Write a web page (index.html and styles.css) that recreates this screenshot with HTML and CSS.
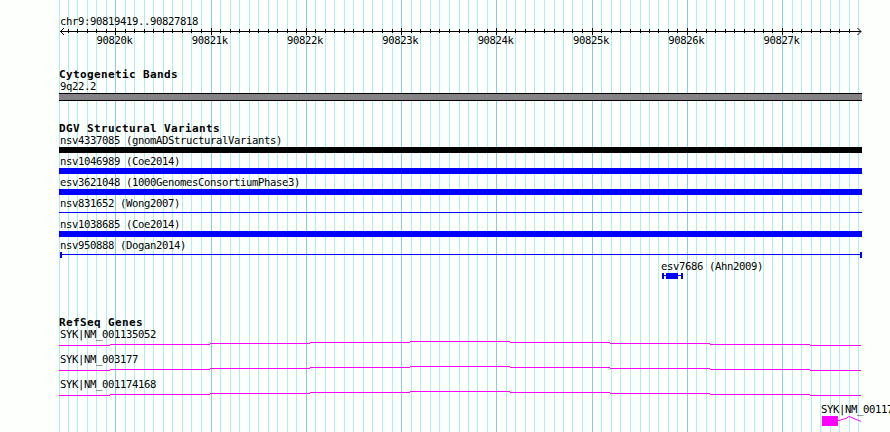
FILE: index.html
```
<!DOCTYPE html>
<html lang="en">
<head>
<meta charset="utf-8">
<title>chr9:90819419..90827818</title>
<link rel="stylesheet" href="styles.css">
</head>
<body>
<main class="browser">
  <svg class="grid" width="890" height="432" aria-hidden="true">
    <path class="minor" d="M59.5 0v432M68.5 0v432M77.5 0v432M87.5 0v432M96.5 0v432M106.5 0v432M125.5 0v432M134.5 0v432M144.5 0v432M153.5 0v432M163.5 0v432M172.5 0v432M182.5 0v432M191.5 0v432M201.5 0v432M220.5 0v432M230.5 0v432M239.5 0v432M249.5 0v432M258.5 0v432M268.5 0v432M277.5 0v432M287.5 0v432M296.5 0v432M315.5 0v432M325.5 0v432M334.5 0v432M344.5 0v432M353.5 0v432M363.5 0v432M372.5 0v432M382.5 0v432M392.5 0v432M411.5 0v432M420.5 0v432M430.5 0v432M439.5 0v432M449.5 0v432M459.5 0v432M468.5 0v432M477.5 0v432M487.5 0v432M506.5 0v432M515.5 0v432M525.5 0v432M534.5 0v432M544.5 0v432M554.5 0v432M563.5 0v432M572.5 0v432M582.5 0v432M601.5 0v432M611.5 0v432M620.5 0v432M630.5 0v432M640.5 0v432M649.5 0v432M658.5 0v432M668.5 0v432M677.5 0v432M696.5 0v432M706.5 0v432M715.5 0v432M725.5 0v432M734.5 0v432M744.5 0v432M754.5 0v432M763.5 0v432M772.5 0v432M792.5 0v432M801.5 0v432M811.5 0v432M820.5 0v432M830.5 0v432M839.5 0v432M849.5 0v432M858.5 0v432"/>
    <path class="major" d="M115.5 0v432M211.5 0v432M306.5 0v432M401.5 0v432M496.5 0v432M592.5 0v432M687.5 0v432M782.5 0v432"/>
  </svg>

  <header class="ruler">
    <p class="label">chr9:90819419..90827818</p>
    <svg class="axis" width="803" height="7" viewBox="59 28 803 7">
      <path d="M60 31.5H861M64 28L60.5 31.5L64 35M857.5 28L861 31.5L857.5 35"/>
      <path d="M68.5 29v4M77.5 29v4M87.5 29v4M96.5 29v4M106.5 29v4M125.5 29v4M134.5 29v4M144.5 29v4M153.5 29v4M163.5 29v4M172.5 29v4M182.5 29v4M191.5 29v4M201.5 29v4M220.5 29v4M230.5 29v4M239.5 29v4M249.5 29v4M258.5 29v4M268.5 29v4M277.5 29v4M287.5 29v4M296.5 29v4M315.5 29v4M325.5 29v4M334.5 29v4M344.5 29v4M353.5 29v4M363.5 29v4M372.5 29v4M382.5 29v4M392.5 29v4M411.5 29v4M420.5 29v4M430.5 29v4M439.5 29v4M449.5 29v4M459.5 29v4M468.5 29v4M477.5 29v4M487.5 29v4M506.5 29v4M515.5 29v4M525.5 29v4M534.5 29v4M544.5 29v4M554.5 29v4M563.5 29v4M572.5 29v4M582.5 29v4M601.5 29v4M611.5 29v4M620.5 29v4M630.5 29v4M640.5 29v4M649.5 29v4M658.5 29v4M668.5 29v4M677.5 29v4M696.5 29v4M706.5 29v4M715.5 29v4M725.5 29v4M734.5 29v4M744.5 29v4M754.5 29v4M763.5 29v4M772.5 29v4M792.5 29v4M801.5 29v4M811.5 29v4M820.5 29v4M830.5 29v4M839.5 29v4M849.5 29v4"/>
      <path d="M115.5 28v7M211.5 28v7M306.5 28v7M401.5 28v7M496.5 28v7M592.5 28v7M687.5 28v7M782.5 28v7"/>
    </svg>
    <div class="ticks">
      <span>90820k</span><span>90821k</span><span>90822k</span><span>90823k</span><span>90824k</span><span>90825k</span><span>90826k</span><span>90827k</span>
    </div>
  </header>

  <section class="bands">
    <h2>Cytogenetic Bands</h2>
    <p class="label">9q22.2</p>
    <div class="band"></div>
  </section>

  <section class="variants">
    <h2>DGV Structural Variants</h2>
    <div class="variant"><p class="label">nsv4337085 (gnomADStructuralVariants)</p><div class="bar black"></div></div>
    <div class="variant"><p class="label">nsv1046989 (Coe2014)</p><div class="bar"></div></div>
    <div class="variant"><p class="label">esv3621048 (1000GenomesConsortiumPhase3)</p><div class="bar"></div></div>
    <div class="variant"><p class="label">nsv831652 (Wong2007)</p><div class="bar thin"></div></div>
    <div class="variant"><p class="label">nsv1038685 (Coe2014)</p><div class="bar"></div></div>
    <div class="variant"><p class="label">nsv950888 (Dogan2014)</p>
      <svg class="span" width="803" height="6"><path d="M1 0h2v6h-2zM801 0h2v6h-2zM3 2h798v1H3z"/></svg></div>
    <div class="variant short"><p class="label">esv7686 (Ahn2009)</p>
      <svg class="span" width="24" height="6"><path d="M1 0h2v6H1zM3 2h17v1H3zM5 0h12v6H5zM20 0h2v6h-2z"/></svg></div>
  </section>

  <section class="genes">
    <h2>RefSeq Genes</h2>
    <div class="gene"><p class="label">SYK|NM_001135052</p>
      <svg class="intron" width="803" height="5"><path d="M0 4.5H51M51 3.5H151M151 2.5H251M251 1.5H351M351 .5H451M451 1.5H551M551 2.5H651M651 3.5H751M751 4.5H802"/></svg></div>
    <div class="gene"><p class="label">SYK|NM_003177</p>
      <svg class="intron" width="803" height="5"><path d="M0 4.5H51M51 3.5H151M151 2.5H251M251 1.5H351M351 .5H451M451 1.5H551M551 2.5H651M651 3.5H751M751 4.5H802"/></svg></div>
    <div class="gene"><p class="label">SYK|NM_001174168</p>
      <svg class="intron" width="803" height="5"><path d="M0 4.5H51M51 3.5H151M151 2.5H251M251 1.5H351M351 .5H451M451 1.5H551M551 2.5H651M651 3.5H751M751 4.5H802"/></svg></div>
    <div class="gene exon"><p class="label">SYK|NM_00117</p>
      <svg width="40" height="10"><path class="block" d="M1 0h16v10H1z"/><path class="link" d="M17 4.5h1l3-1 4-1 3-2 3 1 4 2 3 1 2 1"/></svg></div>
  </section>
</main>
</body>
</html>
```
FILE: styles.css
```
* { box-sizing: border-box; }
body {
  margin: 0;
  background: #fcfffc;
  color: #000;
  font: 10.6px/11px "DejaVu Sans Mono", monospace;
  letter-spacing: -0.38px;
}
.browser {
  position: relative;
  width: 890px;
  height: 432px;
  padding: 16px 0 0 59px;
  overflow: hidden;
}
.browser > :not(.grid) { position: relative; }
.grid { position: absolute; inset: 0; }
svg { display: block; }
.minor { stroke: #aeeeec; }
.major { stroke: #84ceec; }
p, h2 { margin: 0; }
.label { height: 12px; padding-left: 1px; white-space: nowrap; }
h2 {
  height: 12px;
  font: bold 11px/11px "DejaVu Sans Mono", monospace;
  letter-spacing: 0.378px;
}

.ruler { height: 53px; }
.axis { overflow: visible; fill: none; stroke: #000; }
.ticks {
  display: flex;
  justify-content: space-between;
  width: 703px;
  margin-left: 37.5px;
}

.bands { height: 54px; }
.band {
  width: 803px;
  height: 8px;
  border: solid #000;
  border-width: 1px 0;
  background: #848284;
}

.variants { height: 194px; }
.variant { height: 21px; }
.bar { width: 803px; height: 6px; background: #00f; }
.black { background: #000; }
.thin { height: 1px; margin-top: 2px; }
.span { fill: #00f; }
.short { margin-left: 602px; }
.short .label { padding-left: 0; }

.gene { height: 25px; }
.intron { fill: none; stroke: #f0f; }
.exon { margin-left: 762px; }
.exon .label { padding-left: 0; }
.block { fill: #f0f; }
.link { fill: none; stroke: #f0f; }
```
